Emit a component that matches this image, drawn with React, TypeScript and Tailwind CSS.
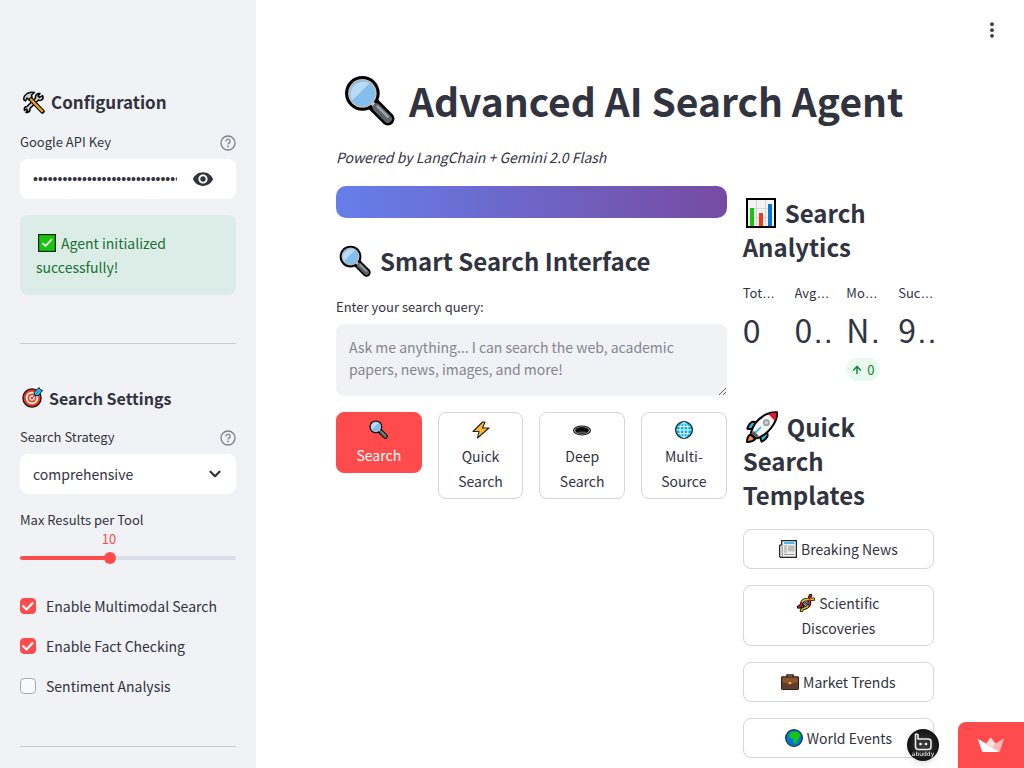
import { useState, type ReactNode } from "react";
import { EllipsisVertical, ChevronDown, ArrowUp } from "lucide-react";
import { MdVisibility } from "react-icons/md";

type IconProps = { className?: string };

function Magnifier({ className = "" }: IconProps) {
  return (
    <svg viewBox="0 0 50 50" className={className} aria-hidden="true">
      <path d="M28 28 L43 43" stroke="#000" strokeWidth="13" strokeLinecap="round" />
      <circle cx="18" cy="18" r="17" fill="#000" />
      <circle cx="18" cy="18" r="14" fill="#c4bdb9" />
      <circle cx="18" cy="18" r="12.5" fill="#83beec" />
      <path d="M8 25 A12.5 12.5 0 0 1 25 8 Z" fill="#b8dcf5" />
      <path d="M27 27 L31 31" stroke="#c4bdb9" strokeWidth="4" />
      <path d="M32 32 L43 43" stroke="#596368" strokeWidth="8" strokeLinecap="round" />
      <path d="M33 31 L43 41" stroke="#98a5aa" strokeWidth="2.5" strokeLinecap="round" />
    </svg>
  );
}

function Tools({ className = "" }: IconProps) {
  const wrench = "M5 8 Q2 14 7 17 Q10 19 13 17 L30 34 Q29 41 36 42 L38 42 L35 38 L37 35 L41 38 Q43 31 36 30 L19 13 Q20 6 13 4 L10 4 L14 9 L11 12 Z";
  return (
    <svg viewBox="0 0 46 46" className={className} aria-hidden="true">
      <g fill="#d0d0d0" stroke="#000" strokeWidth="3" strokeLinejoin="round">
        <path d={wrench} transform="translate(46 1) scale(-1 1)" />
        <path d="M4 18 Q2 11 9 6 Q15 1 25 3 L19 8 L20 13 L14 18 L10 14 L7 20 Z" />
      </g>
      <path d="M18 17 L41 41" stroke="#000" strokeWidth="9" strokeLinecap="round" />
      <path d="M18 17 L40 40" stroke="#f5a20a" strokeWidth="5" strokeLinecap="round" />
    </svg>
  );
}

function CheckBox({ className = "" }: IconProps) {
  return (
    <svg viewBox="0 0 18 18" className={className} aria-hidden="true">
      <rect width="18" height="18" fill="#222" />
      <rect x="1.2" y="1.2" width="15.6" height="15.6" fill="#16c60c" />
      <path d="M4.5 9.2 L7.5 12 L14 5.2" fill="none" stroke="#fff" strokeWidth="1.8" />
    </svg>
  );
}

function Target({ className = "" }: IconProps) {
  return (
    <svg viewBox="0 0 42 42" className={className} aria-hidden="true">
      <circle cx="20" cy="22" r="19.5" fill="#111" />
      <circle cx="20" cy="22" r="17" fill="#f03a17" />
      <circle cx="20" cy="22" r="12.5" fill="#fff" />
      <circle cx="20" cy="22" r="9" fill="#f03a17" />
      <circle cx="20" cy="22" r="5.5" fill="#fff" />
      <circle cx="20" cy="22" r="3" fill="#f03a17" />
      <path d="M24 11 L34 1 L36 5 L41 7 L32 18 L26 17 Z" fill="#28c2f0" stroke="#111" strokeWidth="2" />
      <path d="M20 22 L34 8" stroke="#176dc0" strokeWidth="2" />
    </svg>
  );
}

function BarChart({ className = "" }: IconProps) {
  return (
    <svg viewBox="0 0 30 30" className={className} aria-hidden="true">
      <rect width="30" height="30" fill="#000" />
      <rect x="2" y="2" width="26" height="26" fill="#f3f3f3" />
      <path d="M2 10.5h26M2 19.5h26M10.5 2v26M19.5 2v26" stroke="#d5d5d5" />
      <rect x="4" y="10" width="4" height="18" fill="#16c60c" />
      <rect x="13" y="15" width="4" height="13" fill="#f03a17" />
      <rect x="22" y="6" width="4" height="22" fill="#0078d7" />
    </svg>
  );
}

function Rocket({ className = "" }: IconProps) {
  return (
    <svg viewBox="0 0 96 96" className={className} aria-hidden="true">
      <g stroke="#000" strokeWidth="6" strokeLinejoin="round">
        <path d="M20 55 L4 53 Q8 38 20 32 L40 34Z" fill="#28b9ee" />
        <path d="M41 76 L47 92 Q61 86 65 74 L61 52Z" fill="#28b9ee" />
        <path d="M3 93 Q3 76 13 70 L28 83 Q21 93 3 93Z" fill="#f7894a" />
        <path d="M15 65 Q23 30 60 10 Q76 3 93 4 Q95 20 84 38 Q65 70 33 82Z" fill="#f4f4f4" />
      </g>
      <path d="M67 9 Q80 5 91 6 Q92 17 87 30Z" fill="#e81224" />
      <path d="M15 67 L24 60 L38 74 L31 81Z" fill="#5e5e62" />
      <path d="M28 65 L45 48" stroke="#28b9ee" strokeWidth="5" />
      <circle cx="61" cy="35" r="10" fill="#999" />
      <circle cx="61" cy="35" r="6" fill="#ccc" />
    </svg>
  );
}

function Bolt({ className = "" }: IconProps) {
  return (
    <svg viewBox="0 0 18 18" className={className} aria-hidden="true">
      <path d="M10.5 1 L1 10.5 H7 L5.5 17 L17 7 H10.5 L13 1 Z" fill="#fdb92e" stroke="#222" strokeWidth="1.1" strokeLinejoin="round" />
    </svg>
  );
}

function Hole({ className = "" }: IconProps) {
  return (
    <svg viewBox="0 0 18 18" className={className} aria-hidden="true">
      <ellipse cx="9" cy="9.5" rx="9" ry="5" fill="#111" />
      <ellipse cx="9" cy="9.5" rx="7.8" ry="4" fill="#ccc" />
      <ellipse cx="9" cy="9.5" rx="6.8" ry="3.4" fill="#080808" />
      <ellipse cx="9" cy="11.5" rx="4.5" ry="1" fill="#555" />
    </svg>
  );
}

function Globe({ className = "" }: IconProps) {
  return (
    <svg viewBox="0 0 18 18" className={className} aria-hidden="true">
      <circle cx="9" cy="9" r="8.4" fill="#00b4f0" stroke="#222" strokeWidth="1.2" />
      <path d="M1.5 9h15M3 5.5h12M3 12.5h12M9 1.5v15" stroke="#fff" strokeWidth="1" />
      <ellipse cx="9" cy="9" rx="4" ry="7.5" fill="none" stroke="#fff" />
    </svg>
  );
}

function Newspaper({ className = "" }: IconProps) {
  return (
    <svg viewBox="0 0 18 18" className={className} aria-hidden="true">
      <path d="M2.7 .6H17.4V17.4H1.5L.6 16.4V5.5L2.7 4.6Z" fill="#eee" stroke="#222" strokeWidth="1.2" />
      <path d="M3.2 4v12.5" stroke="#888" />
      <path d="M5 3h10.5" stroke="#30b5f2" strokeWidth="1.8" />
      <rect x="9" y="5.5" width="6.5" height="6" fill="#bdbdbd" />
      <path d="M5 6h3M5 8h3M5 10h3M5 12h3M5 14.5h10.5" stroke="#9a9a9a" />
    </svg>
  );
}

function Dna({ className = "" }: IconProps) {
  return (
    <svg viewBox="0 0 18 18" className={className} aria-hidden="true">
      <g fill="none" strokeLinecap="round">
        <path d="M1.5 13 C5 13 4 10 5.500 7.500 C7.500 4 12 6 16.500 5.200 M4.500 16.500 C5.500 13 9 15 11.500 12 C14 9 11 5 13.500 1.500" stroke="#111" strokeWidth="3.400" />
        <path d="M6.500 7.500 L11.500 12 M9 6 L13 10 M5 10 L9 14" stroke="#111" strokeWidth="2.200" />
        <path d="M7 8 L11 12 M9.500 7 L12.500 10" stroke="#28a9e8" strokeWidth="1" />
        <path d="M1.500 13 C5 13 4 10 5.500 7.500" stroke="#e81224" strokeWidth="1.500" />
        <path d="M5.500 7.500 C7.500 4 12 6 16.500 5.200" stroke="#e4cb09" strokeWidth="1.700" />
        <path d="M4.500 16.500 C5.500 13 9 15 11.500 12" stroke="#e4cb09" strokeWidth="1.700" />
        <path d="M11.500 12 C14 9 11 5 13.500 1.500" stroke="#e81224" strokeWidth="1.500" />
      </g>
    </svg>
  );
}

function Briefcase({ className = "" }: IconProps) {
  return (
    <svg viewBox="0 0 18 18" className={className} aria-hidden="true">
      <path d="M6 4V2h6v2" fill="none" stroke="#3a2018" strokeWidth="1.6" />
      <rect x=".6" y="3.8" width="16.8" height="12.6" rx=".8" fill="#8e562e" stroke="#33201b" strokeWidth="1.2" />
      <path d="M1.2 9 Q9 12 16.8 9V15.8H1.2Z" fill="#603d30" />
      <rect x="7.8" y="9" width="2.4" height="2.2" fill="#fcbc19" />
    </svg>
  );
}

function Earth({ className = "" }: IconProps) {
  return (
    <svg viewBox="0 0 18 18" className={className} aria-hidden="true">
      <circle cx="9" cy="9" r="8.3" fill="#0078d7" stroke="#173044" strokeWidth="1.3" />
      <path d="M4 6 L6 3.5 L9 2.5 L13 3 L15.5 6 L14.5 8.5 L12.5 11 L11.5 14 L10 15 L8.5 12 L8 9.5 L5 9Z" fill="#16c60c" />
    </svg>
  );
}

function HelpIcon() {
  return (
    <svg viewBox="0 0 16 16" className="size-4" fill="none" stroke="#7f818b" strokeWidth="1.3" aria-hidden="true">
      <circle cx="8" cy="8" r="7" />
      <path d="M6 6.4 A2.05 2.05 0 1 1 9 8.1 Q8 8.6 8 9.5" />
      <circle cx="8" cy="11.5" r=".35" />
    </svg>
  );
}

function Crown() {
  return (
    <svg viewBox="0 0 26 16" className="w-[26px]" aria-hidden="true">
      <path d="M0 2 L8.5 6.5 L12.5 0.5 L17.5 6.5 L26 1.5 L22 14 Q21.5 15 20.5 15 H5.5 Q4.5 15 4 14Z" fill="#ffb8b8" />
      <path d="M0 2 L21 15 H5.5 Q4.5 15 4 14Z" fill="#fff" />
      <path d="M8.5 6.5 L12.5 0.5 L17.5 6.5 L14.5 10.5Z" fill="#ffdede" />
    </svg>
  );
}

function BuddyBadge() {
  return (
    <svg viewBox="0 0 32 32" className="size-8" role="img" aria-label="abuddy">
      <defs>
        <radialGradient id="badge">
          <stop offset="0" stopColor="#414141" />
          <stop offset="1" stopColor="#111" />
        </radialGradient>
      </defs>
      <circle cx="16" cy="16" r="16" fill="url(#badge)" />
      <path d="M8.500 5 V17.500 Q8.500 20.500 11.500 20.500 H21 Q24 20.500 24 18 V12.500 Q24 10 21 10 H11 V6 Q11 5 8.500 5" fill="none" stroke="#eee" strokeWidth="1.600" strokeLinejoin="round" />
      <circle cx="13.500" cy="15" r="1.300" fill="#fff" />
      <circle cx="19" cy="15" r="1.300" fill="#fff" />
      <text x="16" y="27" fontFamily="DejaVu Sans" fontSize="6" textAnchor="middle" fill="#fff">abuddy</text>
    </svg>
  );
}

function Heading({ icon, children }: { icon: ReactNode; children: ReactNode }) {
  return (
    <h2 className="text-[24px] leading-[34px] font-semibold">
      {icon}
      {children}
    </h2>
  );
}

const headingIcon = "mr-[9px] ml-[3px] inline-block size-8 align-[-6px]";
const smallIcon = "mr-1 inline-block size-[18px] align-[-3px]";
const outline =
  "min-h-10 w-full cursor-pointer rounded-lg border border-[#d6d6d9] bg-white pt-[5px] pb-1 text-center text-[14px] leading-[25px]";

function Field({ id, label }: { id: string; label: string }) {
  return (
    <div className="flex h-[29px] items-center justify-between pb-[5px]">
      <label htmlFor={id} className="text-[13px] leading-5">{label}</label>
      <button type="button" aria-label={`Help for ${label}`} className="cursor-pointer pt-[2px]"><HelpIcon /></button>
    </div>
  );
}

function Toggle({ label, initial }: { label: string; initial: boolean }) {
  const [on, setOn] = useState(initial);
  return (
    <label className="flex h-6 items-center gap-[10px] text-[14px] leading-6">
      <span className="grid size-4 shrink-0">
        <input
          type="checkbox"
          checked={on}
          onChange={(e) => setOn(e.target.checked)}
          className="col-start-1 row-start-1 size-4 appearance-none rounded border border-[#a9abb2] bg-[#f9fafc] checked:border-[#ff4b4b] checked:bg-[#ff4b4b]"
        />
        {on && (
          <svg viewBox="0 0 16 16" className="pointer-events-none col-start-1 row-start-1 size-4" aria-hidden="true">
            <path d="M2.5 7.5 L6.5 11.5 L13 4.5" fill="none" stroke="#fff" strokeWidth="2.2" />
          </svg>
        )}
      </span>
      {label}
    </label>
  );
}

function Sidebar() {
  const [results, setResults] = useState(10);
  const [show, setShow] = useState(false);
  const part = ((results - 3) / 17) * 100;
  return (
    <aside className="w-64 shrink-0 bg-[#f0f2f6] px-5 pt-[90px]">
      <h3 className="text-[17px] leading-6 font-semibold">
        <Tools className="mr-[6px] ml-[2px] inline-block size-[23px] align-[-5px]" />
        Configuration
      </h3>
      <div className="mt-4">
        <Field id="key" label="Google API Key" />
        <div className="flex h-10 items-center rounded-lg bg-white pr-[22px] pl-[13px]">
          <input
            id="key"
            type={show ? "text" : "password"}
            defaultValue="example-key-value-for-the-search-agent"
            className="min-w-0 flex-1 bg-transparent font-['Liberation_Sans',sans-serif] text-[14px] outline-none"
          />
          <button type="button" aria-label="Show key" onClick={() => setShow(!show)} className="ml-[15px] cursor-pointer">
            <MdVisibility className="size-[22px]" />
          </button>
        </div>
      </div>
      <div className="mt-4 rounded-lg bg-[#dcede7] p-4 text-[14px] leading-6 text-[#177233]">
        <CheckBox className="mr-[5px] ml-[2px] inline-block size-[18px] align-[-3px]" />
        Agent initialized successfully!
      </div>
      <hr className="mt-12 border-[#cacbd1]" />
      <h3 className="mt-[42px] text-[16px] leading-6 font-semibold">
        <Target className="mr-[6px] ml-[2px] inline-block size-[21px] align-[-3px]" />
        Search Settings
      </h3>
      <div className="mt-[15px]">
        <Field id="strategy" label="Search Strategy" />
        <div className="grid items-center">
          <select id="strategy" className="col-start-1 row-start-1 h-10 w-full appearance-none rounded-lg bg-white pr-10 pl-[13px] text-[14px]">
            <option>comprehensive</option>
          </select>
          <ChevronDown className="pointer-events-none col-start-1 row-start-1 mr-3 size-[18px] justify-self-end" strokeWidth={3} />
        </div>
      </div>
      <div className="mt-4">
        <label htmlFor="results" className="block text-[13px] leading-5">Max Results per Tool</label>
        <output className="block w-fit -translate-x-1/2 text-[13px] leading-[18px] text-[#ff4b4b]" style={{ marginLeft: `${part}%` }}>
          {results}
        </output>
        <input
          id="results"
          type="range"
          min={3}
          max={20}
          value={results}
          onChange={(e) => setResults(Number(e.target.value))}
          className="mt-1 block h-3 w-full appearance-none bg-transparent [&::-webkit-slider-runnable-track]:h-1 [&::-webkit-slider-runnable-track]:rounded-full [&::-webkit-slider-runnable-track]:[background:var(--track)] [&::-webkit-slider-thumb]:-mt-1 [&::-webkit-slider-thumb]:size-3 [&::-webkit-slider-thumb]:appearance-none [&::-webkit-slider-thumb]:rounded-full [&::-webkit-slider-thumb]:bg-[#ff4b4b]"
          style={{ ["--track" as string]: `linear-gradient(to right, #ff4b4b ${part}%, #d9dfe8 ${part}%)` }}
        />
      </div>
      <div className="mt-[30px] flex flex-col gap-4">
        <Toggle label="Enable Multimodal Search" initial={true} />
        <Toggle label="Enable Fact Checking" initial={true} />
        <Toggle label="Sentiment Analysis" initial={false} />
      </div>
      <hr className="mt-12 border-[#cacbd1]" />
    </aside>
  );
}

const metrics = [
  { label: "Tot", value: "0", cut: false },
  { label: "Avg", value: "0", cut: true },
  { label: "Mo", value: "N", cut: true, delta: "0" },
  { label: "Suc", value: "9", cut: true },
];

const modes = [
  { label: "Quick Search", Icon: Bolt },
  { label: "Deep Search", Icon: Hole },
  { label: "Multi-Source", Icon: Globe },
];

const templates = [
  { label: "Breaking News", Icon: Newspaper },
  { label: "Scientific Discoveries", Icon: Dna },
  { label: "Market Trends", Icon: Briefcase },
  { label: "World Events", Icon: Earth },
];

function SearchPanel() {
  return (
    <section className="min-w-0 grow basis-[calc(66.67%-16px)]">
      <div className="h-8 rounded-[10px] bg-[linear-gradient(90deg,#667eea,#764ba2)]" />
      <div className="mt-[26px]">
        <Heading icon={<Magnifier className={headingIcon} />}>Smart Search Interface</Heading>
      </div>
      <label htmlFor="query" className="mt-[19px] block pb-[7px] text-[13px] leading-5">Enter your search query:</label>
      <textarea
        id="query"
        placeholder="Ask me anything... I can search the web, academic papers, news, images, and more!"
        className="block h-[72px] w-full resize rounded-lg bg-[#f0f2f6] px-[13px] py-3 text-[14px] leading-[22px] outline-none placeholder:text-[#838690]"
      />
      <div className="mt-4 grid grid-cols-4 items-start gap-4">
        <button type="button" className="cursor-pointer rounded-lg border border-[#ff4b4b] bg-[#ff4b4b] px-3 pt-[5px] pb-1 text-[14px] leading-[25px] text-white">
          <Magnifier className="mx-auto mt-[2px] mb-1 block size-[19px]" />
          Search
        </button>
        {modes.map(({ label, Icon }) => (
          <button key={label} type="button" className={`${outline} px-3`}>
            <Icon className="mx-auto my-[4px] mt-[3px] mb-[5px] block size-[18px]" />
            {label}
          </button>
        ))}
      </div>
    </section>
  );
}

function AnalyticsPanel() {
  return (
    <section className="min-w-0 grow basis-[calc(33.33%-16px)] pt-[10px]">
      <Heading icon={<BarChart className="mr-[9px] ml-[3px] inline-block size-[30px] align-[-5px]" />}>Search Analytics</Heading>
      <div className="mt-[19px] grid grid-cols-4 gap-4">
        {metrics.map((m) => (
          <div key={m.label} className="min-w-0">
            <div className="overflow-hidden text-[13px] leading-5 whitespace-nowrap">
              {m.label}
              <span className="font-['Liberation_Sans',sans-serif]">…</span>
            </div>
            <div className="mt-[2px] overflow-hidden text-[32px] leading-[46px] whitespace-nowrap">
              {m.value}
              {m.cut && <span className="font-['Liberation_Sans',sans-serif]">…</span>}
            </div>
            {m.delta && (
              <div className="mt-[3px] flex h-[23px] w-[34px] items-center gap-1 rounded-full bg-[#e8f9ee] pl-[5px] text-[13px] text-[#158237]">
                <ArrowUp className="size-3 shrink-0" strokeWidth={3} />
                {m.delta}
              </div>
            )}
          </div>
        ))}
      </div>
      <div className="mt-[29px]">
        <Heading icon={<Rocket className={headingIcon} />}>Quick Search Templates</Heading>
      </div>
      <div className="mt-[17px] flex flex-col gap-4">
        {templates.map(({ label, Icon }) => (
          <button key={label} type="button" className={`${outline} px-6`}>
            <Icon className={smallIcon} />
            {label}
          </button>
        ))}
      </div>
    </section>
  );
}

export default function App() {
  return (
    <div className="flex min-h-screen bg-white font-['Noto_Sans_CJK_SC',sans-serif] text-[#31333f]">
      <Sidebar />
      <main className="min-w-0 flex-1 pt-[74px] pr-[90px] pl-20">
        <h1 className="text-[39px] leading-[53px] font-bold whitespace-nowrap">
          <Magnifier className="mr-[14px] ml-2 inline-block size-[51px] align-[-9px]" />
          Advanced AI Search Agent
        </h1>
        <p className="mt-[18px] text-[14px] leading-6 italic">Powered by LangChain + Gemini 2.0 Flash</p>
        <div className="mt-[17px] flex gap-4">
          <SearchPanel />
          <AnalyticsPanel />
        </div>
      </main>
      <button type="button" aria-label="Menu" className="fixed top-5 right-[22px] cursor-pointer">
        <EllipsisVertical className="size-5" strokeWidth={2.5} />
      </button>
      <a href="#profile" className="fixed right-[85px] bottom-[7px] rounded-full shadow-md"><BuddyBadge /></a>
      <a href="#host" aria-label="Hosted app" className="fixed right-0 bottom-0 flex h-[46px] w-[66px] items-center justify-center rounded-tl-lg bg-[#ff4b4b]"><Crown /></a>
    </div>
  );
}
